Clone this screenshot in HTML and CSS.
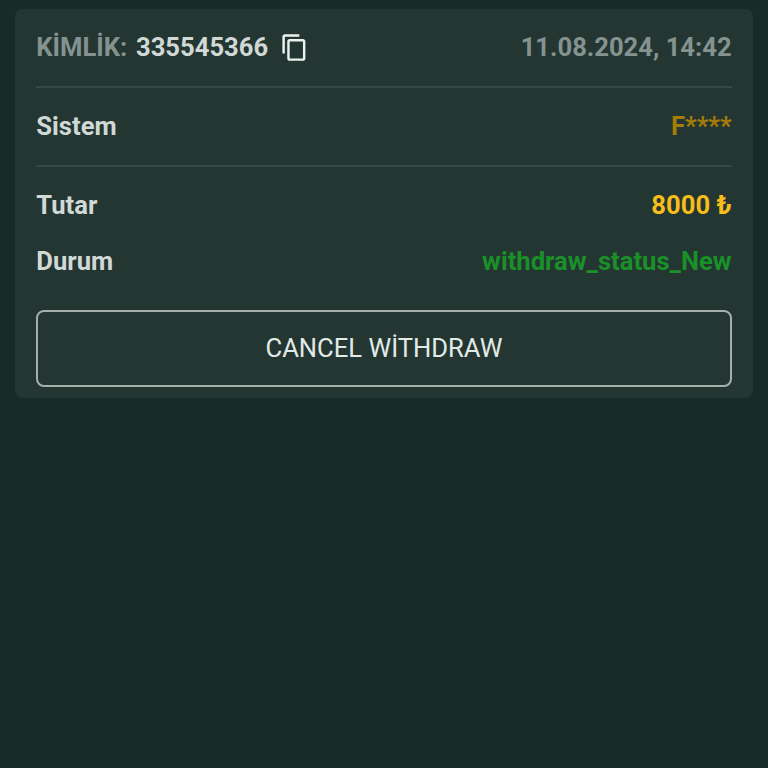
FILE: index.html
```html
<!DOCTYPE html>
<html lang="tr">
<head>
<meta charset="utf-8">
<title>Withdraw</title>
<link rel="stylesheet" href="styles.css">
</head>
<body>
<main class="card">
  <div class="row head">
    <div class="ident"><span class="muted">KİMLİK:</span><span class="number">335545366</span>
      <svg class="copy" viewBox="0 0 24 24"><path d="M16 1H4c-1.100 0-2 .9-2 2v14h2V3h12V1zm3 4H8c-1.100 0-2 .9-2 2v14c0 1.100.9 2 2 2h11c1.100 0 2-.9 2-2V7c0-1.100-.9-2-2-2zm0 16H8V7h11v14z"/></svg>
    </div>
    <span class="muted date">11.08.2024, 14:42</span>
  </div>
  <div class="row system"><span>Sistem</span><span class="masked">F****</span></div>
  <div class="row amount"><span>Tutar</span><span class="sum">8000 ₺</span></div>
  <div class="row status"><span>Durum</span><span class="state">withdraw_status_New</span></div>
  <button class="cancel">CANCEL WİTHDRAW</button>
</main>
</body>
</html>
```
FILE: styles.css
```css
* { box-sizing: border-box; }
body {
  margin: 0;
  padding: 9px 15px;
  min-height: 768px;
  background: #182c27;
  font-family: Roboto, "Liberation Sans", sans-serif;
  font-size: 25.600px;
  font-weight: 700;
  line-height: 32px;
  color: #d0d9d6;
}
.card {
  height: 389px;
  padding: 0 21.400px 0 21.300px;
  border-radius: 8px;
  background: #243632;
}
.row {
  display: flex;
  align-items: center;
  justify-content: space-between;
  white-space: nowrap;
}
.row span { padding-bottom: 1px; }
.head { height: 79px; border-bottom: 2px solid #364843; }
.system { height: 79px; border-bottom: 2px solid #364843; }
.amount { height: 76px; }
.status { height: 36px; }
.ident { display: flex; align-items: center; }
.muted { color: #84938f; }
.number { margin-left: 8.700px; }
.copy { width: 29px; height: 29px; margin-left: 11.800px; fill: #eaf3f0; }
.masked { color: #a57c08; }
.sum { color: #f6bd1b; }
.state { color: #1a9029; }
.cancel {
  display: block;
  width: 100%;
  height: 77px;
  margin-top: 31px;
  padding: 0 0 1px;
  border: 2px solid #a3b0ac;
  border-radius: 8px;
  background: transparent;
  color: #e1eae7;
  font: 400 25.600px/32px Roboto, "Liberation Sans", sans-serif;
}
```
